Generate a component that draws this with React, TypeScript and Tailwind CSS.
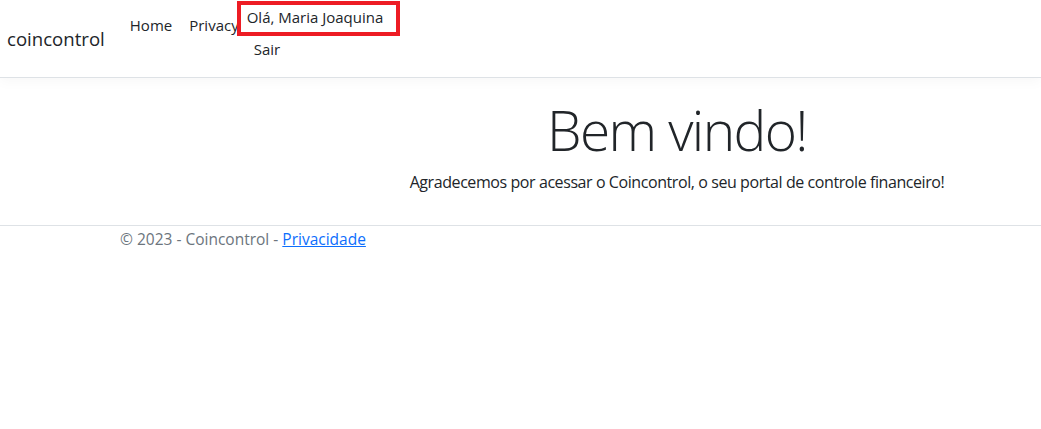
export default function App() {
  const font = { fontFamily: '"Open Sans", "Noto Sans", sans-serif' };
  return (
    <div className="w-[1041px] h-[429px] bg-white text-[#212529] text-[16px]" style={font}>
      <nav className="h-[78px] border-b border-[#dee2e6] shadow-[0_4px_12px_rgba(0,0,0,0.03)] flex items-start">
        <a className="ml-[7px] mt-[26px] text-[18.6px] leading-[26px] text-[#212529]">coincontrol</a>
        <ul className="flex items-start ml-[25px] text-[15px]">
          <li className="mt-[13px] leading-[24px] text-[#212529]">Home</li>
          <li className="mt-[13px] ml-[17px] leading-[24px] text-[#212529] whitespace-nowrap">Privacy</li>
          <li className="flex flex-col items-start -ml-[2px] relative">
            <div className="mt-[1px] w-[163px] h-[35px] border-4 border-[#ed1c24] bg-white pl-[6px] leading-[25px] whitespace-nowrap">
              Olá, Maria Joaquina
            </div>
            <div className="ml-[17px] mt-[1px] leading-[24px]">Sair</div>
          </li>
        </ul>
      </nav>
      <main className="pl-[313px] h-[147px] flex flex-col items-center">
        <h1 className="mt-[20px] text-[55px] font-light leading-[64px] tracking-[-1.6px]">Bem vindo!</h1>
        <p className="mt-[8px] leading-[24px] tracking-[-0.42px]">
          Agradecemos por acessar o Coincontrol, o seu portal de controle financeiro!
        </p>
      </main>
      <footer className="border-t border-[#dee2e6] pl-[120px] pt-[1px] leading-[24px] text-[15.5px] text-[#6c757d]">
        © 2023 - Coincontrol - <a className="text-[#0d6efd] underline">Privacidade</a>
      </footer>
    </div>
  );
}
